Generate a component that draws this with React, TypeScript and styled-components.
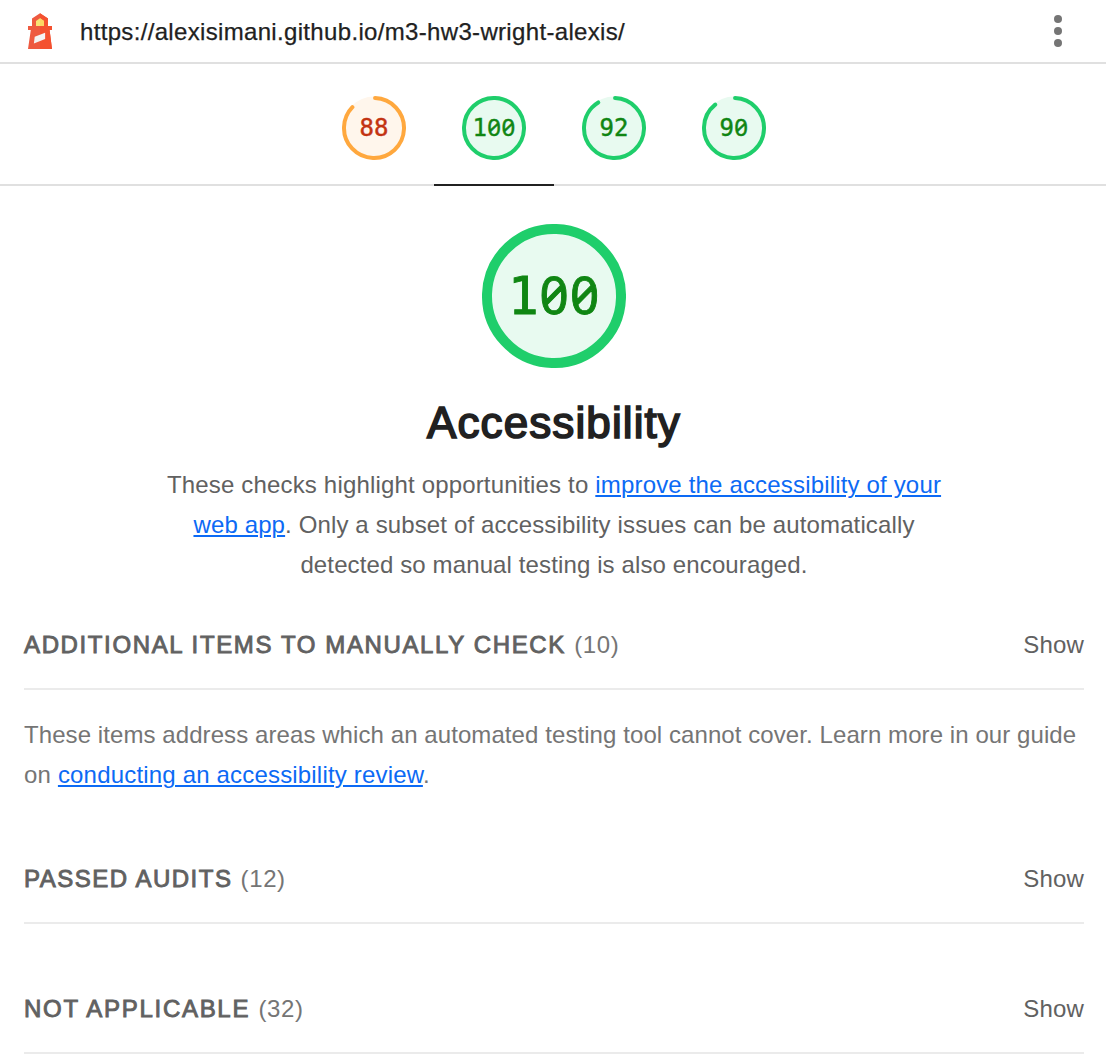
import React from "react";
import styled, { createGlobalStyle } from "styled-components";

const GlobalStyle = createGlobalStyle`
  body { margin: 0; background: #fff; overflow: hidden; }
  * { box-sizing: border-box; }
`;

const Page = styled.div`
  width: 1108px;
  height: 1054px;
  overflow: hidden;
  font-family: "Liberation Sans", Arial, sans-serif;
  font-size: 24px;
  line-height: 40px;
  color: #616161;
`;
const Topbar = styled.header`
  display: flex;
  align-items: center;
  height: 64px;
  padding: 0 40px 0 20px;
  border-bottom: 2px solid #e0e0e0;
`;
const Logo = styled.svg`
  width: 40px;
  height: 40px;
  margin-right: 20px;
`;
const Url = styled.span`
  flex: 1;
  color: #212121;
  letter-spacing: 0.33px;
  padding-top: 1px;
  -webkit-text-stroke: 0.25px #212121;
`;
const MenuDots = styled.svg`
  width: 20px;
  height: 40px;
  fill: #757575;
`;
const Tabs = styled.nav`
  display: flex;
  justify-content: center;
  height: 122px;
  border-bottom: 2px solid #e0e0e0;
`;
const Tab = styled.div<{ $active?: boolean }>`
  display: flex;
  justify-content: center;
  width: 120px;
  height: 122px;
  padding-top: 32px;
  border-bottom: 2px solid ${(p) => (p.$active ? "#212121" : "#e0e0e0")};
`;
const GaugeBox = styled.div<{ $size: number }>`
  display: grid;
  place-items: center;
  width: ${(p) => p.$size}px;
  height: ${(p) => p.$size}px;
  & > * { grid-area: 1 / 1; }
`;
const Score = styled.span<{ $size: number; $color: string }>`
  display: flex;
  align-items: baseline;
  height: ${(p) => p.$size}px;
  color: ${(p) => p.$color};
  font-family: "DejaVu Sans Mono", monospace;
  font-size: ${(p) => p.$size}px;
  line-height: 1;
  -webkit-text-stroke: 0.018em ${(p) => p.$color};
`;
const Digit = styled.span<{ $zero: boolean }>`
  width: 0.6em;
  text-align: center;
  ${(p) => p.$zero && `font-family: "Noto Sans", sans-serif; font-feature-settings: "zero"; line-height: 0.6;`}
`;
const Category = styled.section`
  display: flex;
  flex-direction: column;
  align-items: center;
  padding-top: 38px;
`;
const Title = styled.h1`
  margin: 27px 0 0;
  font-size: 44px;
  line-height: 56px;
  font-weight: 400;
  color: #212121;
  letter-spacing: 1.1px;
  -webkit-text-stroke: 1.7px #212121;
`;
const Description = styled.p`
  margin: 14px 0 0;
  width: 800px;
  text-align: center;
`;
const Link = styled.a`
  color: #0c6af5;
  text-decoration: underline;
  text-decoration-thickness: 2px;
  text-underline-offset: 2px;
`;
const Line = styled.span<{ $spacing: number }>`
  display: block;
  white-space: nowrap;
  letter-spacing: ${(p) => p.$spacing}px;
`;
const Clump = styled.section<{ $gap: number }>`
  margin: ${(p) => p.$gap}px 24px 0;
`;
const ClumpHeader = styled.div`
  display: flex;
  justify-content: space-between;
  height: 66px;
  padding-top: 1px;
  border-bottom: 2px solid #ebebeb;
`;
const ClumpTitle = styled.h2<{ $spacing: number }>`
  margin: 0;
  font-size: 24px;
  font-weight: 400;
  letter-spacing: ${(p) => p.$spacing}px;
  -webkit-text-stroke: 0.9px #616161;
`;
const Count = styled.span`
  color: #757575;
  letter-spacing: 0.6px;
  -webkit-text-stroke: 0;
`;
const Toggle = styled.span`
  letter-spacing: 0.15px;
`;
const ClumpText = styled.p`
  margin: 25px 0 0;
  color: #757575;
`;

const palette = {
  average: { ring: "#ffa83e", fill: "#fff6ec", text: "#c33311" },
  pass: { ring: "#1fce6b", fill: "#e8faf0", text: "#108613" },
};

function Gauge({ score, size, stroke, font }: { score: number; size: number; stroke: number; font: number }) {
  const c = score >= 90 ? palette.pass : palette.average;
  const r = (size - stroke) / 2;
  const len = 2 * Math.PI * r;
  const arc = score === 100 ? len : (score / 100) * len - stroke / 2 - 0.8;
  return (
    <GaugeBox $size={size}>
      <svg width={size} height={size}>
        <circle cx={size / 2} cy={size / 2} r={size / 2 - 0.5} fill={c.fill} />
        <circle
          cx={size / 2}
          cy={size / 2}
          r={r}
          fill="none"
          stroke={c.ring}
          strokeWidth={stroke}
          strokeLinecap="round"
          strokeDasharray={`${arc} ${len}`}
          transform={`rotate(-88 ${size / 2} ${size / 2})`}
        />
      </svg>
      <Score $size={font} $color={c.text}>
        {String(score).split("").map((d, i) => (
          <Digit key={i} $zero={d === "0"}>{d}</Digit>
        ))}
      </Score>
    </GaugeBox>
  );
}

const scores = [88, 100, 92, 90];

export default function App() {
  return (
    <Page>
      <GlobalStyle />
      <Topbar>
        <Logo viewBox="0 0 40 40">
          <path d="M12 7.5 20 2.2l8 5.3V15h4v4h-2.4L32 38H8l2.8-19H8v-4h4z" fill="#ee5a40" />
          <path d="M20 2.2 28 7.5V15h4v4h-2.4L32 38H20z" fill="#f4512f" />
          <path d="M16 10l4-2.8 4 2.8v5h-8z" fill="#f8e475" />
          <path d="M20 7.2l4 2.8v5h-4z" fill="#fdd663" />
          <path d="m14.7 25.8 10.4-4.1v6.3l-11.2 4.6z" fill="#f4f4f4" />
        </Logo>
        <Url>https://alexisimani.github.io/m3-hw3-wright-alexis/</Url>
        <MenuDots viewBox="0 0 20 40">
          <circle cx="10" cy="8" r="4" />
          <circle cx="10" cy="20" r="4" />
          <circle cx="10" cy="32" r="4" />
        </MenuDots>
      </Topbar>
      <Tabs>
        {scores.map((s) => (
          <Tab key={s} $active={s === 100}>
            <Gauge score={s} size={64} stroke={4} font={24} />
          </Tab>
        ))}
      </Tabs>
      <Category>
        <Gauge score={100} size={144} stroke={10} font={51} />
        <Title>Accessibility</Title>
        <Description>
          <Line $spacing={0.17}>These checks highlight opportunities to <Link>improve the accessibility of your</Link></Line>
          <Line $spacing={0.13}><Link>web app</Link>. Only a subset of accessibility issues can be automatically</Line>
          <Line $spacing={0.12}>detected so manual testing is also encouraged.</Line>
        </Description>
      </Category>
      <Clump $gap={39}>
        <ClumpHeader>
          <ClumpTitle $spacing={1.62}>ADDITIONAL ITEMS TO MANUALLY CHECK <Count>(10)</Count></ClumpTitle>
          <Toggle>Show</Toggle>
        </ClumpHeader>
        <ClumpText>
          <Line $spacing={0.08}>These items address areas which an automated testing tool cannot cover. Learn more in our guide</Line>
          <Line $spacing={0.18}>on <Link>conducting an accessibility review</Link>.</Line>
        </ClumpText>
      </Clump>
      <Clump $gap={63}>
        <ClumpHeader>
          <ClumpTitle $spacing={1.5}>PASSED AUDITS <Count>(12)</Count></ClumpTitle>
          <Toggle>Show</Toggle>
        </ClumpHeader>
      </Clump>
      <Clump $gap={64}>
        <ClumpHeader>
          <ClumpTitle $spacing={1.7}>NOT APPLICABLE <Count>(32)</Count></ClumpTitle>
          <Toggle>Show</Toggle>
        </ClumpHeader>
      </Clump>
    </Page>
  );
}
